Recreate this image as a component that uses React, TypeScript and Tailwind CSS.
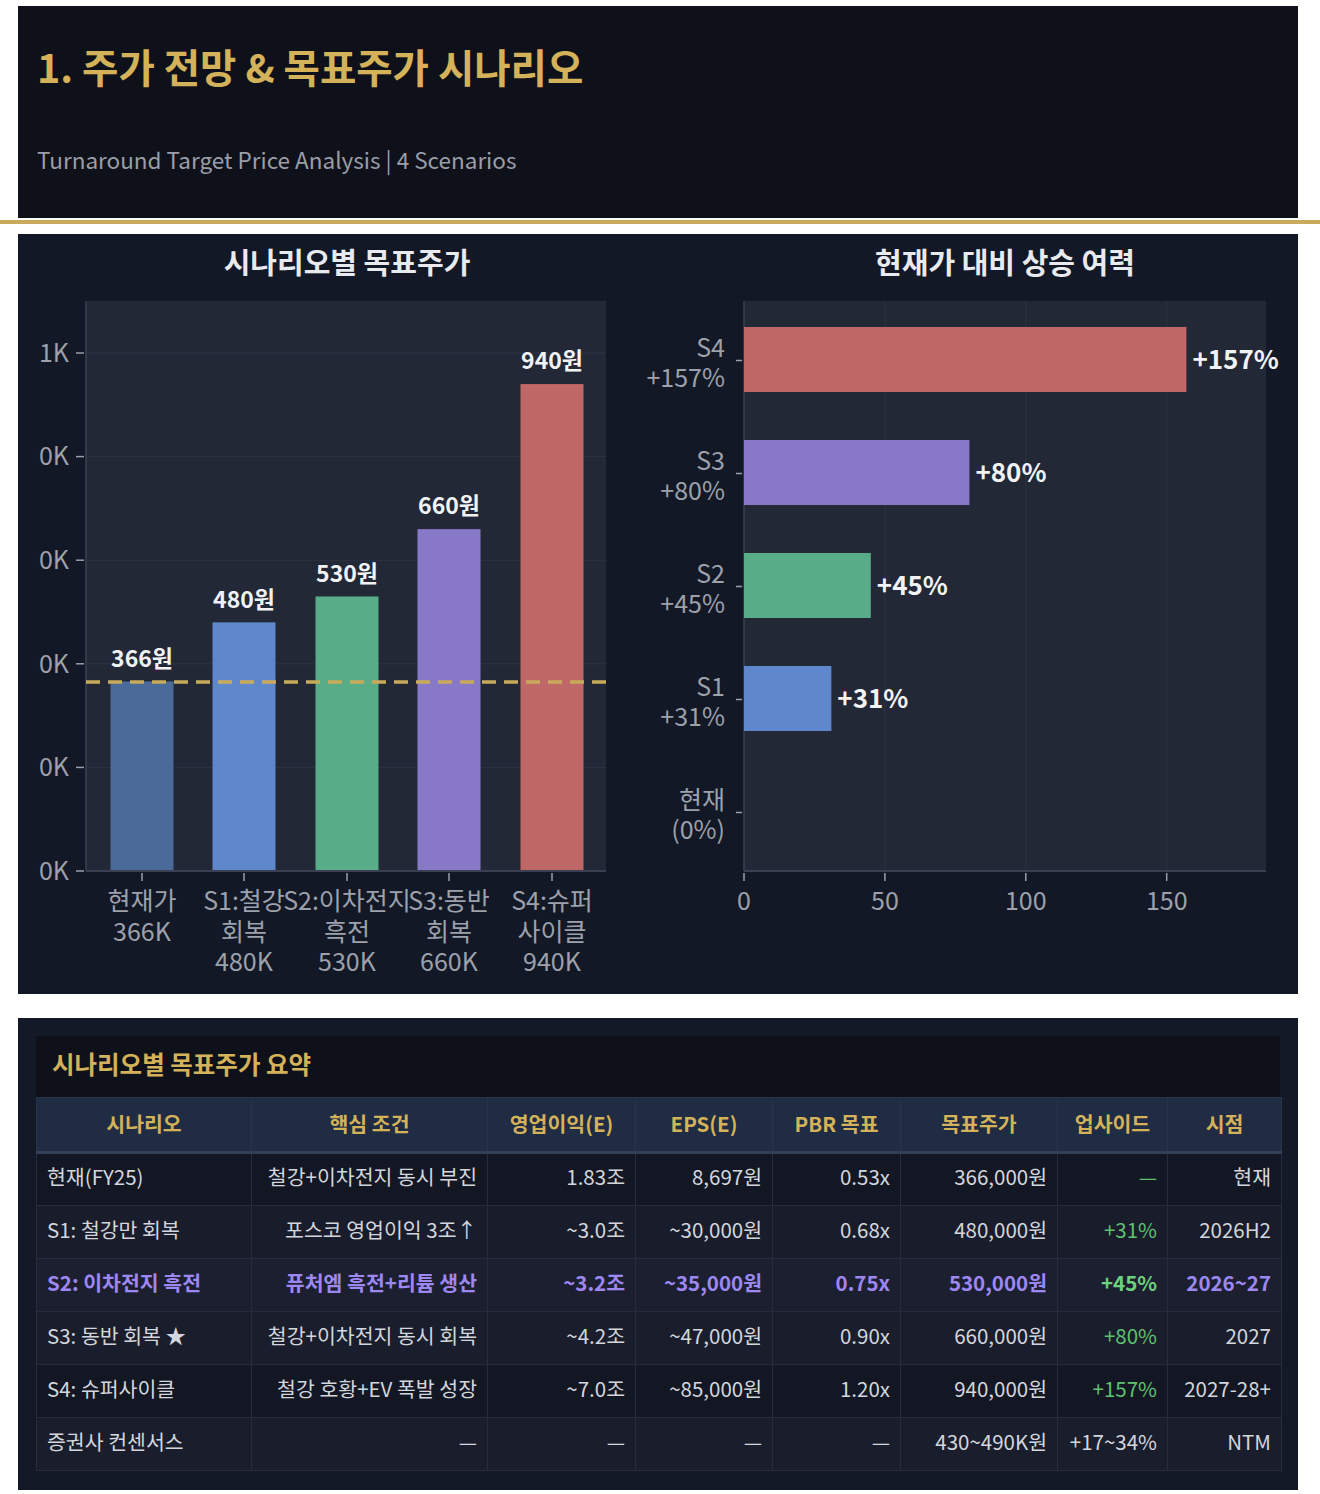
import React from "react";

const FONT = "font-['Noto_Sans_CJK_KR','Noto_Sans',sans-serif]";

const leftBars = [
  { lines: ["현재가", "366K"], v: 366, color: "#4a6a9a", label: "366원" },
  { lines: ["S1:철강", "회복", "480K"], v: 480, color: "#5f88cc", label: "480원" },
  { lines: ["S2:이차전지", "흑전", "530K"], v: 530, color: "#58ac88", label: "530원" },
  { lines: ["S3:동반", "회복", "660K"], v: 660, color: "#8878c8", label: "660원" },
  { lines: ["S4:슈퍼", "사이클", "940K"], v: 940, color: "#c06868", label: "940원" },
];

const rightBars = [
  { a: "S4", b: "+157%", v: 157, color: "#c06868" },
  { a: "S3", b: "+80%", v: 80, color: "#8878c8" },
  { a: "S2", b: "+45%", v: 45, color: "#58ac88" },
  { a: "S1", b: "+31%", v: 31, color: "#5f88cc" },
  { a: "현재", b: "(0%)", v: 0, color: "#5f88cc" },
];

const AX = 25;

function LeftChart() {
  const centers = [142, 244, 347, 449, 552];
  const ticks = [0, 200, 400, 600, 800, 1000];
  const y = (v: number) => 871 - v * 0.518;
  return (
    <svg width={622} height={760} viewBox="18 234 622 760" className="block">
      <text x={347} y={266} textAnchor="middle" dominantBaseline="middle" fontSize={29} fontWeight={700} fill="#e8eaee">
        시나리오별 목표주가
      </text>
      <rect x={86} y={301} width={520} height={570} fill="#222836" />
      {ticks.map((t) => (
        <g key={t}>
          {t > 0 && <line x1={86} x2={606} y1={y(t)} y2={y(t)} stroke="#2d3343" strokeWidth={1} />}
          <line x1={76} x2={84} y1={y(t)} y2={y(t)} stroke="#9aa0ab" strokeWidth={1.5} />
          <text x={69} y={y(t) + 2} textAnchor="end" dominantBaseline="middle" fontSize={AX} fill="#9ca1ab">
            {t === 1000 ? "1K" : "0K"}
          </text>
        </g>
      ))}
      <line x1={86} x2={86} y1={301} y2={871} stroke="#3a4051" strokeWidth={1.5} />
      {leftBars.map((b, i) => (
        <g key={i}>
          <rect x={centers[i] - 31.5} y={y(b.v)} width={63} height={871 - y(b.v)} fill={b.color} />
          <text x={centers[i]} y={y(b.v) - 21} textAnchor="middle" dominantBaseline="middle" fontSize={23} fontWeight={700} fill="#f1f2f4">
            {b.label}
          </text>
          <line x1={centers[i]} x2={centers[i]} y1={873} y2={881} stroke="#9aa0ab" strokeWidth={1.5} />
          {b.lines.map((l, j) => (
            <text key={j} x={centers[i]} y={903.5 + j * 30.5} textAnchor="middle" dominantBaseline="middle" fontSize={AX} fill="#9ca1ab">
              {l}
            </text>
          ))}
        </g>
      ))}
      <line x1={86} x2={606} y1={871} y2={871} stroke="#3a4051" strokeWidth={2} />
      <line x1={86} x2={606} y1={682} y2={682} stroke="#c9aa5a" strokeWidth={3.5} strokeDasharray="14 8" />
    </svg>
  );
}

function RightChart() {
  const x = (v: number) => 744 + v * 2.818;
  const centers = [359.5, 472.5, 585.5, 698.5, 811.5];
  return (
    <svg width={658} height={760} viewBox="640 234 658 760" className="block">
      <text x={1005} y={266} textAnchor="middle" dominantBaseline="middle" fontSize={29} fontWeight={700} fill="#e8eaee">
        현재가 대비 상승 여력
      </text>
      <rect x={744} y={301} width={522} height={570} fill="#222836" />
      {[0, 50, 100, 150].map((t) => (
        <g key={t}>
          {t > 0 && <line x1={x(t)} x2={x(t)} y1={301} y2={871} stroke="#2d3343" strokeWidth={1} />}
          <line x1={x(t)} x2={x(t)} y1={873} y2={881} stroke="#9aa0ab" strokeWidth={1.5} />
          <text x={x(t)} y={903.5} textAnchor="middle" dominantBaseline="middle" fontSize={AX} fill="#9ca1ab">
            {t}
          </text>
        </g>
      ))}
      <line x1={744} x2={744} y1={301} y2={871} stroke="#3a4051" strokeWidth={1.5} />
      <line x1={744} x2={1266} y1={871} y2={871} stroke="#3a4051" strokeWidth={2} />
      {rightBars.map((b, i) => (
        <g key={i}>
          {b.v > 0 && <rect x={744} y={centers[i] - 32.5} width={x(b.v) - 744} height={65} fill={b.color} />}
          {b.v > 0 && (
            <text x={x(b.v) + 6} y={centers[i] + 2} dominantBaseline="middle" fontSize={26} fontWeight={700} fill="#f1f2f4">
              {b.b}
            </text>
          )}
          <line x1={736} x2={742} y1={centers[i] + 1} y2={centers[i] + 1} stroke="#9aa0ab" strokeWidth={1.5} />
          <text x={725} y={centers[i] - 9} textAnchor="end" dominantBaseline="middle" fontSize={AX} fill="#9ca1ab">
            {b.a}
          </text>
          <text x={725} y={centers[i] + 21} textAnchor="end" dominantBaseline="middle" fontSize={AX} fill="#9ca1ab">
            {b.b}
          </text>
        </g>
      ))}
    </svg>
  );
}

type Row = {
  cells: string[];
  bg: string;
  hl?: boolean;
};

const rows: Row[] = [
  { cells: ["현재(FY25)", "철강+이차전지 동시 부진", "1.83조", "8,697원", "0.53x", "366,000원", "—", "현재"], bg: "bg-[#131723]" },
  { cells: ["S1: 철강만 회복", "포스코 영업이익 3조↑", "~3.0조", "~30,000원", "0.68x", "480,000원", "+31%", "2026H2"], bg: "bg-[#191d2b]" },
  { cells: ["S2: 이차전지 흑전", "퓨처엠 흑전+리튬 생산", "~3.2조", "~35,000원", "0.75x", "530,000원", "+45%", "2026~27"], bg: "bg-[#1c1f2f]", hl: true },
  { cells: ["S3: 동반 회복 ★", "철강+이차전지 동시 회복", "~4.2조", "~47,000원", "0.90x", "660,000원", "+80%", "2027"], bg: "bg-[#1a1e2c]" },
  { cells: ["S4: 슈퍼사이클", "철강 호황+EV 폭발 성장", "~7.0조", "~85,000원", "1.20x", "940,000원", "+157%", "2027-28+"], bg: "bg-[#131723]" },
  { cells: ["증권사 컨센서스", "—", "—", "—", "—", "430~490K원", "+17~34%", "NTM"], bg: "bg-[#1a1e2c]" },
];

const headers = ["시나리오", "핵심 조건", "영업이익(E)", "EPS(E)", "PBR 목표", "목표주가", "업사이드", "시점"];
const widths = ["w-[215px]", "w-[236px]", "w-[148px]", "w-[137px]", "w-[128px]", "w-[157px]", "w-[110px]", "w-[114px]"];

function cellColor(r: Row, i: number) {
  if (r.hl) {
    if (i === 6) return "text-[#6bd17c] font-bold";
    return "text-[#9d87f2] font-bold";
  }
  if (i === 6) {
    if (r.cells[6] === "+17~34%") return "text-[#d3d6dc]";
    return "text-[#5fc070]";
  }
  return "text-[#d3d6dc]";
}

export default function App() {
  return (
    <div className={`${FONT} bg-white w-[1320px] min-h-[1494px] pt-[6px]`}>
      <div className="ml-[18px] w-[1280px] h-[212px] bg-[#0f111a] px-[19px] pt-[32px]">
        <div className="text-[39.5px] leading-[56px] font-bold text-[#d4b25a]">1. 주가 전망 &amp; 목표주가 시나리오</div>
        <div className="mt-[50px] text-[22.5px] leading-[30px] text-[#9a9ea8]">Turnaround Target Price Analysis | 4 Scenarios</div>
      </div>
      <div className="mt-[2px] h-[4px] w-full bg-[#c9aa5c]" />
      <div className="ml-[18px] w-[1280px] mt-[10px] h-[760px] bg-[#131826] flex">
        <LeftChart />
        <RightChart />
      </div>
      <div className="ml-[18px] w-[1280px] mt-[24px] bg-[#141927] p-[18px] pb-[19px]">
        <div className="h-[61px] bg-[#0e1119] flex items-center px-[16px] text-[24.5px] font-bold text-[#d4b25a]">
          <span className="-mt-[4px]">시나리오별 목표주가 요약</span>
        </div>
        <table className="w-[1245px] border-collapse table-fixed">
          <thead>
            <tr className="h-[55px] bg-[#1f2c44]">
              {headers.map((h, i) => (
                <th
                  key={h}
                  className={`${widths[i]} border border-[#2b3447] border-b-[3px] border-b-[#334058] pb-[2px] text-center text-[20.5px] font-bold text-[#d4b25a]`}
                >
                  {h}
                </th>
              ))}
            </tr>
          </thead>
          <tbody>
            {rows.map((r, ri) => (
              <tr key={ri} className={`h-[53px] ${r.bg}`}>
                {r.cells.map((c, i) => (
                  <td
                    key={i}
                    className={`border border-[#272c3a] px-[10px] pb-[6px] text-[20.5px] whitespace-nowrap ${i === 0 ? "text-left" : "text-right"} ${cellColor(r, i)}`}
                  >
                    {c}
                  </td>
                ))}
              </tr>
            ))}
          </tbody>
        </table>
      </div>
    </div>
  );
}
